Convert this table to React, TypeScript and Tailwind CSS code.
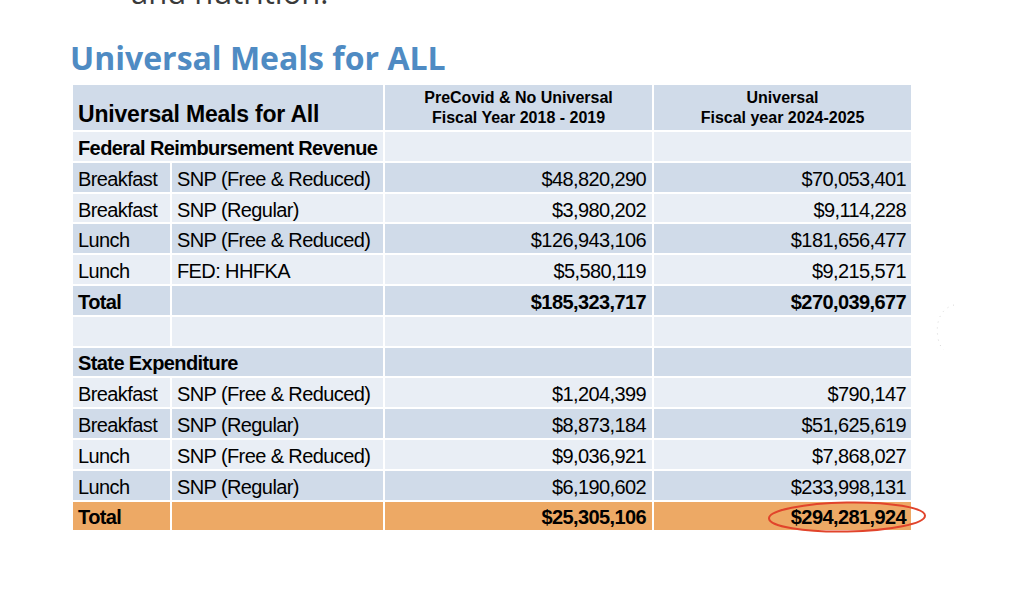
const dark = "bg-[#d0dbe9]";
const light = "bg-[#e9eef5]";
const orange = "bg-[#eda965]";

type Row =
  | { kind: "section"; label: string; bg: string }
  | { kind: "blank"; bg: string }
  | { kind: "data"; meal: string; program: string; a: string; b: string; bg: string }
  | { kind: "total"; a: string; b: string; bg: string };

const rows: Row[] = [
  { kind: "section", label: "Federal Reimbursement Revenue", bg: light },
  { kind: "data", meal: "Breakfast", program: "SNP (Free & Reduced)", a: "$48,820,290", b: "$70,053,401", bg: dark },
  { kind: "data", meal: "Breakfast", program: "SNP (Regular)", a: "$3,980,202", b: "$9,114,228", bg: light },
  { kind: "data", meal: "Lunch", program: "SNP (Free & Reduced)", a: "$126,943,106", b: "$181,656,477", bg: dark },
  { kind: "data", meal: "Lunch", program: "FED: HHFKA", a: "$5,580,119", b: "$9,215,571", bg: light },
  { kind: "total", a: "$185,323,717", b: "$270,039,677", bg: dark },
  { kind: "blank", bg: light },
  { kind: "section", label: "State Expenditure", bg: dark },
  { kind: "data", meal: "Breakfast", program: "SNP (Free & Reduced)", a: "$1,204,399", b: "$790,147", bg: light },
  { kind: "data", meal: "Breakfast", program: "SNP (Regular)", a: "$8,873,184", b: "$51,625,619", bg: dark },
  { kind: "data", meal: "Lunch", program: "SNP (Free & Reduced)", a: "$9,036,921", b: "$7,868,027", bg: light },
  { kind: "data", meal: "Lunch", program: "SNP (Regular)", a: "$6,190,602", b: "$233,998,131", bg: dark },
  { kind: "total", a: "$25,305,106", b: "$294,281,924", bg: orange },
];

function Cell({ children, className = "" }: { children?: React.ReactNode; className?: string }) {
  return <div className={`h-[28.8px] flex items-center pt-[3px] whitespace-nowrap ${className}`}>{children}</div>;
}

export default function App() {
  return (
    <div
      className="relative w-[1024px] h-[598px] bg-white overflow-hidden text-black"
      style={{ fontFamily: '"Liberation Sans", Arial, sans-serif' }}
    >
      {/* cut off line from the slide above */}
      <div className="h-[10px] overflow-hidden pl-[131px]">
        <div
          className="-mt-[24px] text-[31px] leading-[33px] text-[#3a3a3a]"
          style={{ fontFamily: '"Open Sans", sans-serif' }}
        >
          and nutrition.
        </div>
      </div>

      <h1
        className="mt-[27px] pl-[70px] text-[32px] leading-[42px] font-bold text-[#4f8bc3]"
        style={{ fontFamily: '"Open Sans", sans-serif' }}
      >
        Universal Meals for ALL
      </h1>

      <div className="mt-[6px] ml-[73px] w-[838px] grid grid-cols-[97px_211px_267px_257px] gap-[2px] text-[20px] tracking-[-0.6px]">
        {/* header */}
        <div className={`col-span-2 h-[45px] flex items-end pb-[4px] pl-[5px] font-bold text-[23px] leading-none tracking-[-0.2px] ${dark}`}>
          Universal Meals for All
        </div>
        <div className={`h-[45px] flex flex-col items-center justify-center pt-[1px] font-bold text-[16px] leading-[20px] tracking-normal ${dark}`}>
          <span>PreCovid &amp; No Universal</span>
          <span>Fiscal Year 2018 - 2019</span>
        </div>
        <div className={`h-[45px] flex flex-col items-center justify-center pt-[1px] font-bold text-[16px] leading-[20px] tracking-normal ${dark}`}>
          <span>Universal</span>
          <span>Fiscal year 2024-2025</span>
        </div>

        {rows.map((r, i) => {
          if (r.kind === "section") {
            return [
              <Cell key={`${i}a`} className={`col-span-2 pl-[5px] font-bold ${r.bg}`}>{r.label}</Cell>,
              <Cell key={`${i}b`} className={r.bg} />,
              <Cell key={`${i}c`} className={r.bg} />,
            ];
          }
          if (r.kind === "blank") {
            return [0, 1, 2, 3].map((k) => <Cell key={`${i}${k}`} className={r.bg} />);
          }
          if (r.kind === "total") {
            return [
              <Cell key={`${i}a`} className={`pl-[5px] font-bold ${r.bg}`}>Total</Cell>,
              <Cell key={`${i}b`} className={r.bg} />,
              <Cell key={`${i}c`} className={`justify-end pr-[6px] font-bold ${r.bg}`}>{r.a}</Cell>,
              <Cell key={`${i}d`} className={`justify-end pr-[5px] font-bold ${r.bg}`}>{r.b}</Cell>,
            ];
          }
          return [
            <Cell key={`${i}a`} className={`pl-[5px] ${r.bg}`}>{r.meal}</Cell>,
            <Cell key={`${i}b`} className={`pl-[5px] ${r.bg}`}>{r.program}</Cell>,
            <Cell key={`${i}c`} className={`justify-end pr-[6px] ${r.bg}`}>{r.a}</Cell>,
            <Cell key={`${i}d`} className={`justify-end pr-[5px] ${r.bg}`}>{r.b}</Cell>,
          ];
        })}
      </div>

      {/* red hand-drawn circle around the final total */}
      <svg className="absolute left-[760px] top-[495px]" width="176" height="44" viewBox="0 0 176 44">
        <ellipse cx="87" cy="22" rx="78" ry="14.5" fill="none" stroke="#e1442b" strokeWidth="2" transform="rotate(-1 87 22)" />
      </svg>

      {/* faint leftover arc on the right */}
      <svg className="absolute left-[930px] top-[300px]" width="40" height="60" viewBox="0 0 40 60">
        <path d="M24 5 C 12 8, 5 20, 8 38 C 9 44, 11 47, 14 50" fill="none" stroke="#d9d9d9" strokeWidth="1" strokeDasharray="1 5" />
      </svg>
    </div>
  );
}
